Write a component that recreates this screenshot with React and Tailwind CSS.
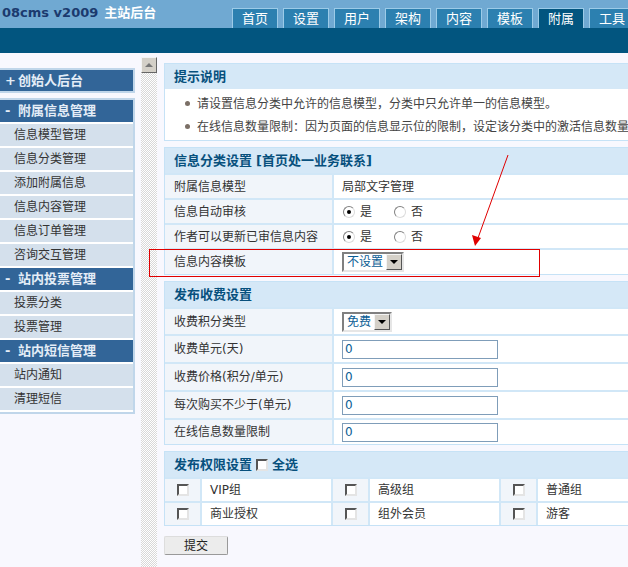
import React from 'react';

const tabs = ['首页', '设置', '用户', '架构', '内容', '模板', '附属', '工具'];

const Radio = ({ checked }) => (
  <span className="inline-flex w-[12px] h-[12px] rounded-full border border-t-[#808080] border-l-[#808080] border-r-[#dcdcdc] border-b-[#dcdcdc] bg-white items-center justify-center">
    {checked && <span className="w-[4px] h-[4px] rounded-full bg-black" />}
  </span>
);

const Checkbox = () => (
  <span className="inline-block w-[12px] h-[12px] border-2 border-t-[#555] border-l-[#555] border-r-[#e4e4e4] border-b-[#e4e4e4] bg-white" />
);

const Select = ({ label }) => (
  <div className="inline-flex h-[20px] border-2 border-t-[#808080] border-l-[#808080] border-r-[#e6e6e6] border-b-[#e6e6e6] bg-white">
    <span className="px-[3px] text-[#0a5d94] leading-[16px]">{label}</span>
    <span className="w-[16px] h-[16px] bg-[#d4d0c8] border border-t-[#f4f4f4] border-l-[#f4f4f4] border-r-[#555] border-b-[#555] flex items-center justify-center">
      <span className="w-0 h-0 border-l-[4px] border-r-[4px] border-t-[4px] border-l-transparent border-r-transparent border-t-black" />
    </span>
  </div>
);

const TextInput = () => (
  <div className="w-[156px] h-[19px] border border-[#7f9db9] bg-white pl-[2px] text-[#0a5d94] leading-[17px]">0</div>
);

function Panel({ title, children }) {
  return (
    <div className="border border-[#c6e2f6] bg-white">
      <div className="h-[25px] bg-[#d5e8f7] pl-[9px] flex items-center text-[13px] font-bold text-[#07507d]">
        {title}
      </div>
      {children}
    </div>
  );
}

function Row({ label, h = 'h-[25px]', children }) {
  return (
    <div className={`flex ${h} border-t-2 border-[#d1e7f7]`}>
      <div className="w-[169px] shrink-0 bg-[#f1f5fa] border-r-2 border-[#d1e7f7] pl-[9px] flex items-center text-[#333]">
        {label}
      </div>
      <div className="flex-1 pl-[8px] flex items-center text-[#333]">{children}</div>
    </div>
  );
}

const YesNo = () => (
  <>
    <span className="ml-[1px] flex items-center"><Radio checked /><span className="ml-[5px]">是</span></span>
    <span className="ml-[22px] flex items-center"><Radio /><span className="ml-[5px]">否</span></span>
  </>
);

const sideItem = 'h-[24px] border-b-2 border-white bg-[#d4e0ec] pl-[14px] flex items-center text-[#333]';
const sideHead = 'h-[24px] border-b-2 border-white bg-[#326598] pl-[5px] flex items-center text-[13px] font-bold text-[#e4edf7]';

export default function App() {
  const groups = [
    ['VIP组', '高级组', '普通组'],
    ['商业授权', '组外会员', '游客'],
  ];

  return (
    <div className="relative w-[628px] h-[567px] overflow-hidden bg-[#f8f8fe] text-[12px] font-['DejaVu_Sans','Noto_Sans_CJK_SC',sans-serif]">
      {/* top bar */}
      <div className="h-[28px] bg-[#70a9d2] flex">
        <div className="w-[232px] shrink-0 pl-[2px] pt-[3px] text-[13px] font-bold leading-[20px]">
          <span className="text-[#1b3a6e]">08cms v2009</span>
          <span className="text-white ml-[6px]">主站后台</span>
        </div>
        <div className="flex gap-[5px] items-end">
          {tabs.map((t) => (
            <div
              key={t}
              className={`w-[46px] h-[20px] shrink-0 border border-b-0 border-[#9ccbe8] text-white text-[13px] flex items-center justify-center ${
                t === '附属' ? 'bg-[#02557f]' : 'bg-[#2c80b0]'
              }`}
            >
              {t}
            </div>
          ))}
        </div>
      </div>
      <div className="h-[25px] bg-[#02557f]" />

      <div className="flex h-[514px]">
        {/* sidebar */}
        <div className="w-[135px] shrink-0 pt-[15px]">
          <div className="border-2 border-l-0 border-[#c0d6ea]">
            <div className="h-[21px] bg-[#326598] pl-[5px] flex items-center text-[13px] font-bold text-[#e4edf7]">
              <span className="inline-block w-[13px]">+</span>创始人后台
            </div>
          </div>
          <div className="mt-[5px] border-2 border-l-0 border-b-0 border-[#c0d6ea] bg-white">
            <div className={sideHead}><span className="inline-block w-[13px]">-</span>附属信息管理</div>
            {['信息模型管理', '信息分类管理', '添加附属信息', '信息内容管理', '信息订单管理', '咨询交互管理'].map((s) => (
              <div key={s} className={sideItem}>{s}</div>
            ))}
            <div className={sideHead}><span className="inline-block w-[13px]">-</span>站内投票管理</div>
            {['投票分类', '投票管理'].map((s) => (
              <div key={s} className={sideItem}>{s}</div>
            ))}
            <div className={sideHead}><span className="inline-block w-[13px]">-</span>站内短信管理</div>
            {['站内通知', '清理短信'].map((s) => (
              <div key={s} className={sideItem}>{s}</div>
            ))}
          </div>
          <div className="h-[2px] bg-[#c0d6ea]" />
        </div>

        {/* scrollbar */}
        <div className="ml-[6px] w-[16px] shrink-0 pt-[4px] flex flex-col">
          <div className="h-[16px] bg-[#d4d0c8] border border-t-[#f4f4f4] border-l-[#f4f4f4] border-r-[#666] border-b-[#666] flex items-center justify-center">
            <span className="w-0 h-0 border-l-[4px] border-r-[4px] border-b-[4px] border-l-transparent border-r-transparent border-b-[#777]" />
          </div>
          <div className="flex-1 bg-[repeating-conic-gradient(#d8d8d8_0_25%,#ffffff_0_50%)] bg-[length:2px_2px]" />
        </div>

        {/* content */}
        <div className="ml-[7px] pt-[10px] w-[720px] shrink-0 flex flex-col gap-[6px]">
          <Panel title="提示说明">
            <div className="pt-[3px] pb-[2px] text-[#444]">
              {[
                '请设置信息分类中允许的信息模型，分类中只允许单一的信息模型。',
                '在线信息数量限制：因为页面的信息显示位的限制，设定该分类中的激活信息数量上限。',
              ].map((s) => (
                <div key={s} className="h-[23px] flex items-center pl-[20px] whitespace-nowrap">
                  <span className="w-[5px] h-[5px] rounded-full bg-[#7b6f66] mr-[7px]" />
                  {s}
                </div>
              ))}
            </div>
          </Panel>

          <Panel title={<>信息分类设置 <span className="ml-[4px]">[首页处一业务联系]</span></>}>
            <Row label="附属信息模型">局部文字管理</Row>
            <Row label="信息自动审核"><YesNo /></Row>
            <Row label="作者可以更新已审信息内容"><YesNo /></Row>
            <Row label="信息内容模板" h="h-[26px]">
              <Select label="不设置" />
            </Row>
          </Panel>

          <Panel title="发布收费设置">
            <Row label="收费积分类型" h="h-[27px]">
              <Select label="免费" />
            </Row>
            <Row label="收费单元(天)" h="h-[28px]"><TextInput /></Row>
            <Row label="收费价格(积分/单元)" h="h-[28px]"><TextInput /></Row>
            <Row label="每次购买不少于(单元)" h="h-[28px]"><TextInput /></Row>
            <Row label="在线信息数量限制" h="h-[26px]"><TextInput /></Row>
          </Panel>

          <Panel title={<span className="flex items-center">发布权限设置<span className="mx-[4px] flex"><Checkbox /></span>全选</span>}>
            {groups.map((g, i) => (
              <div key={i} className="flex h-[24px] border-t-2 border-[#d1e7f7]">
                {g.map((name, j) => (
                  <div key={name} className={`flex w-[168px] ${j < 2 ? 'border-r-2 border-[#d1e7f7]' : ''}`}>
                    <div className="w-[37px] bg-[#f1f5fa] border-r-2 border-[#d1e7f7] flex items-center justify-center">
                      <Checkbox />
                    </div>
                    <div className="flex-1 pl-[8px] flex items-center text-[#333]">{name}</div>
                  </div>
                ))}
              </div>
            ))}
          </Panel>

          <div className="mt-[4px]">
            <button className="w-[64px] h-[19px] bg-[#ececec] border border-[#999] border-t-[#ddd] border-l-[#ddd] rounded-[2px] text-[#222] leading-[16px]">
              提交
            </button>
          </div>
        </div>
      </div>

      {/* annotation overlay */}
      <div className="absolute left-[149px] top-[249px] w-[391px] h-[28px] border border-[#e00000] pointer-events-none" />
      <svg className="absolute left-0 top-0 pointer-events-none" width="628" height="567">
        <line x1="508" y1="155" x2="478" y2="238" stroke="#e00000" strokeWidth="1" />
        <polygon points="475,246 472,235 481,238" fill="#e00000" />
      </svg>
    </div>
  );
}
